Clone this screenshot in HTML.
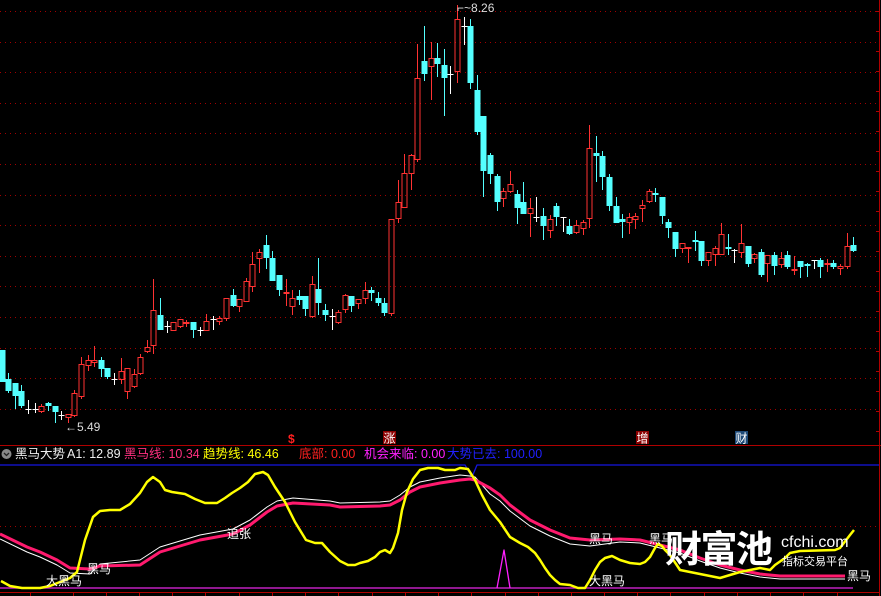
<!DOCTYPE html>
<html><head><meta charset="utf-8"><style>
html,body{margin:0;padding:0;background:#000;width:881px;height:596px;overflow:hidden}
svg{display:block}
text{font-family:"Liberation Sans","Noto Sans CJK SC",sans-serif}
</style></head><body>
<svg id="s" width="881" height="596" xmlns="http://www.w3.org/2000/svg">
<rect width="881" height="596" fill="#000"/>
<g id="grid"></g>
<g id="candles"></g>
<line x1="0" y1="445.5" x2="881" y2="445.5" stroke="#b00000" stroke-width="1"/>
<line x1="879.5" y1="0" x2="879.5" y2="596" stroke="#b00000" stroke-width="1"/>
<line x1="0" y1="526.5" x2="879" y2="526.5" stroke="#a00000" stroke-dasharray="1,4"/>
<line x1="0" y1="592.5" x2="879" y2="592.5" stroke="#b00000"/>
<g id="ticks"></g>
<text x="65" y="431" fill="#ddd" font-size="12">←5.49</text>
<text x="457" y="12" fill="#ddd" font-size="12">⌐~8.26</text>
<text x="288" y="443" fill="#ff2020" font-size="12" font-weight="bold">$</text>
<rect x="383" y="431" width="13" height="13" fill="#8b0000"/><text x="383.5" y="442.5" fill="#fff" font-size="12">涨</text>
<rect x="636" y="431" width="13" height="13" fill="#8b0000"/><text x="636.5" y="442.5" fill="#fff" font-size="12">增</text>
<rect x="735" y="431" width="13" height="13" fill="#1e4a78"/><text x="735.5" y="442.5" fill="#fff" font-size="12">财</text>
<circle cx="6.5" cy="454" r="5" fill="#888"/><path d="M4 453 L6.5 455.5 L9 453" stroke="#222" stroke-width="1.3" fill="none"/>
<text y="458" font-size="12.5">
<tspan x="15" fill="#eee">黑马大势</tspan>
<tspan x="67" fill="#eee">A1: 12.89</tspan>
<tspan x="124" fill="#ff3080">黑马线: 10.34</tspan>
<tspan x="203" fill="#ffff00">趋势线: 46.46</tspan>
<tspan x="299" fill="#ff2020">底部: 0.00</tspan>
<tspan x="364" fill="#ff20ff">机会来临: 0.00</tspan>
<tspan x="447" fill="#2020ff">大势已去: 100.00</tspan>
</text>
<g id="ind"></g>
<text x="665" y="562" fill="#fff" font-size="37" font-weight="bold" letter-spacing="-1.5">财富池</text>
<text x="781" y="547" fill="#fff" font-size="16">cfchi.com</text>
<text x="782" y="565" fill="#fff" font-size="11">指标交易平台</text>
<g fill="#fff" font-size="12">
<text x="46" y="585">大黑马</text>
<text x="87" y="573">黑马</text>
<text x="227" y="538">追张</text>
<text x="589" y="543">黑马</text>
<text x="649" y="543">黑马</text>
<text x="589" y="585">大黑马</text>
<text x="847" y="580">黑马</text>
</g>
</svg>
<script>
var NS="http://www.w3.org/2000/svg";
function el(p,t,a){var e=document.createElementNS(NS,t);for(var k in a)e.setAttribute(k,a[k]);p.appendChild(e);return e;}
var g=document.getElementById('grid');
for(var i=0;i<14;i++){var y=Math.round(11+30.6*i)+0.5;el(g,'line',{x1:0,x2:879,y1:y,y2:y,stroke:'#a00000','stroke-dasharray':'1,4'});}
var C=[
['c',350,382,350,382],['c',379,391,373,393],['c',383,396,383,409],['c',391,406,385,408],['w',409,409,400,414],['w',409,409,403,413],['r',406,412,404,413],['c',403,406,402,411],['c',406,412,406,423],['w',415,415,411,420],['r',414,418,414,423],['r',393,416,390,417],['r',364,397,357,399],['r',360,366,355,371],['r',360,363,346,367],['c',360,369,357,377],['c',368,377,368,379],['w',379,379,373,385],['r',371,380,358,384],['r',368,392,368,399],['r',374,387,369,388],['r',357,374,354,375],['r',347,352,340,353],['r',310,346,279,354],['c',315,330,298,330],['w',326,326,321,333],['r',322,331,322,331],['r',319,327,319,328],['r',322,324,320,327],['c',322,330,322,338],['w',330,330,327,336],['r',321,331,314,331],['w',319,319,316,330],['r',318,322,316,325],['r',298,319,298,321],['c',295,306,289,307],['r',299,307,299,312],['r',281,302,278,302],['r',264,287,252,292],['r',252,259,249,273],['c',245,258,235,269],['c',258,281,251,281],['c',275,290,275,296],['r',292,293,279,306],['r',298,307,290,315],['c',296,300,290,305],['c',296,309,296,316],['r',284,317,276,318],['c',289,303,258,315],['c',310,315,304,321],['w',316,316,309,330],['r',312,323,310,324],['r',295,310,294,313],['c',296,306,296,312],['r',299,304,299,309],['r',290,299,282,304],['c',290,293,287,301],['c',298,303,292,306],['c',303,313,298,316],['r',219,314,219,316],
['r',202,219,180,223],['r',173,208,154,208],['r',155,174,154,190],['r',78,160,44,162],['c',61,74,26,81],['r',58,67,42,100],['c',58,64,43,77],['c',65,78,49,116],['w',74,74,66,94],['r',19,72,5,83],['w',26,26,17,45],['c',26,83,19,89],['c',90,132,75,135],['c',116,171,116,197],['c',155,174,153,184],['c',176,202,174,211],['r',191,199,188,207],['r',184,192,171,193],['c',194,208,190,224],['c',202,214,182,214],['r',208,214,198,237],['w',217,217,197,222],['c',216,226,208,240],['r',219,231,215,238],['c',206,217,203,226],['w',217,217,217,232],['c',226,234,219,235],['r',225,233,220,234],['r',222,229,220,235],['r',148,219,125,228],['c',153,156,136,182],['c',156,177,151,190],['c',177,206,174,211],['c',206,223,197,223],['c',219,222,214,238],['r',217,223,213,234],['r',216,220,213,229],['r',205,209,200,222],['r',191,202,189,203],['c',193,195,188,202],['c',197,216,197,224],['c',222,228,219,238],['c',232,249,232,257],['r',243,249,243,253],['r',247,249,247,263],['c',240,241,231,251],['c',241,261,241,266],['r',252,261,252,266],['r',248,255,246,266],['r',234,255,223,255],['c',247,248,234,255],['w',250,250,249,263],['r',243,253,224,258],['c',246,264,246,267],['r',254,259,253,263],['c',252,275,249,277],['r',255,264,255,282],['c',255,266,252,275],['r',258,265,252,268],['c',255,267,251,269],['r',269,271,256,275],['c',261,267,261,278],['c',264,266,263,277],['w',260,260,260,269],['c',260,267,258,278],['r',263,265,259,272],['c',263,267,260,269],['r',266,269,264,275],['r',246,267,233,269],['c',245,251,237,252]];
var cg=document.getElementById('candles');
var col={r:'#ff3232',c:'#54ffff',w:'#ffffff'};
C.forEach(function(d,i){
 var x=Math.round(1.7+6.6*i)+0.5,t=d[0],c=col[t],top=d[1],bot=d[2],hi=d[3],lo=d[4];
 if(t==='r'){
  el(cg,'line',{x1:x,x2:x,y1:hi,y2:top,stroke:c});
  el(cg,'line',{x1:x,x2:x,y1:bot,y2:lo,stroke:c});
  el(cg,'rect',{x:x-2.5,y:top+0.5,width:5,height:Math.max(1,bot-top-1),fill:'none',stroke:c});
 } else if(t==='c'){
  el(cg,'line',{x1:x,x2:x,y1:hi,y2:lo,stroke:c});
  el(cg,'rect',{x:x-3,y:top,width:6,height:Math.max(2,bot-top),fill:c});
 } else {
  el(cg,'line',{x1:x,x2:x,y1:hi,y2:lo,stroke:c});
  el(cg,'line',{x1:x-3,x2:x+3,y1:top+0.5,y2:top+0.5,stroke:c});
 }
});
var tk=document.getElementById('ticks');
[30,73,106,139,172,205,239,272,305,338,372,405,438,471,505,538,571,604,637,670,704,737,770,803,837].forEach(function(x){el(tk,'line',{x1:x+.5,x2:x+.5,y1:592,y2:596,stroke:'#b00000'});});
for(var y=11;y<445;y+=20){el(tk,'line',{x1:876,x2:879,y1:y+.5,y2:y+.5,stroke:'#b00000'});}
var ind=document.getElementById('ind');
function pl(pts,c,w){el(ind,'polyline',{points:pts.map(function(p){return p.join(',')}).join(' '),fill:'none',stroke:c,'stroke-width':w,'stroke-linejoin':'round'});}
el(ind,'line',{x1:0,x2:853,y1:588,y2:588,stroke:'#c020c0','stroke-width':1.5});
pl([[0,465],[465,465],[472,477],[477,465],[879,465]],'#1515e0',1.3);
pl([[497,588],[504,550],[510,588]],'#ff20ff',1.3);
var pink=[[0,534],[27,547],[40,552],[57,560],[70,568],[90,569],[100,566],[140,565],[160,552],[200,540],[233,534],[250,525],[267,512],[277,506],[293,503],[330,505],[340,507],[380,506],[390,505],[400,500],[410,492],[420,487],[440,483],[460,480],[470,479],[475,480],[490,488],[500,495],[510,505],[530,520],[550,530],[570,538],[590,540],[620,539],[640,540],[660,545],[680,550],[700,558],[720,565],[740,570],[760,574],[780,576],[845,576]];
var white=pink.map(function(p,i){var x=p[0],y=p[1];var d=0;
 if(x<100)d=5;else if(x<140)d=-2;else if(x<300)d=-5;else if(x<330)d=2;else if(x<400)d=-4;else if(x<470)d=-5;else if(x<480)d=-3;else if(x<600)d=6;else d=3;return [x,y+d];});
pl(white,'#ffffff',1);
pl(pink,'#ff1a6e',3);
var yel=[[1,581],[10,586],[22,588],[40,588],[50,586],[60,582],[70,578],[77,572],[85,540],[93,517],[100,511],[110,510],[120,510],[130,504],[140,493],[147,482],[153,477],[160,482],[165,490],[172,492],[185,494],[195,499],[205,503],[217,503],[225,498],[232,493],[240,488],[248,482],[255,474],[263,472],[268,475],[275,487],[285,502],[295,522],[306,540],[315,543],[322,543],[330,552],[340,561],[348,565],[355,565],[360,563],[368,561],[375,557],[380,552],[385,550],[390,553],[393,548],[398,533],[402,510],[407,492],[413,479],[420,470],[428,468],[438,468],[445,470],[455,470],[460,468],[468,469],[475,480],[482,495],[490,510],[500,522],[510,537],[520,543],[528,547],[535,553],[540,560],[545,568],[550,575],[555,580],[560,584],[570,585],[578,588],[585,588],[590,580],[595,570],[600,562],[605,558],[612,556],[620,560],[630,563],[640,564],[645,562],[650,557],[655,548],[658,544],[662,546],[665,550],[670,555],[680,570],[690,572],[700,574],[710,576],[720,578],[730,575],[740,572],[750,570],[760,568],[770,570],[775,565],[785,558],[790,553],[800,551],[835,550],[840,548],[850,535],[854,530]];
pl(yel,'#ffff00',2.5);
</script>
</body></html>
